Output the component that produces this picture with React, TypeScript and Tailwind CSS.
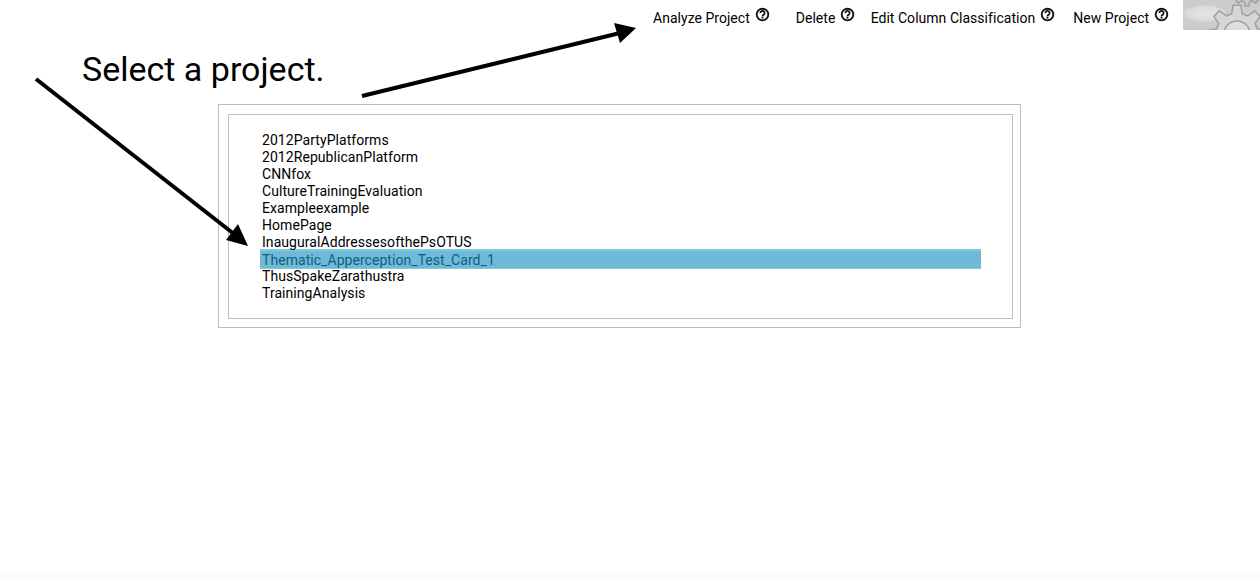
import React from 'react'

const projects = [
  '2012PartyPlatforms',
  '2012RepublicanPlatform',
  'CNNfox',
  'CultureTrainingEvaluation',
  'Exampleexample',
  'HomePage',
  'InauguralAddressesofthePsOTUS',
  'Thematic_Apperception_Test_Card_1',
  'ThusSpakeZarathustra',
  'TrainingAnalysis',
]

const gearPath = (cx: number, cy: number, outer: number, inner: number, teeth: number) => {
  const step = (Math.PI * 2) / teeth
  let d = ''
  for (let i = 0; i < teeth; i++) {
    const a = -Math.PI / 2 + i * step
    const pts: [number, number][] = [
      [a - step * 0.32, inner],
      [a - step * 0.17, outer],
      [a + step * 0.17, outer],
      [a + step * 0.32, inner],
    ]
    for (const [ang, r] of pts) {
      const x = (cx + Math.cos(ang) * r).toFixed(1)
      const y = (cy + Math.sin(ang) * r).toFixed(1)
      d += `${d ? 'L' : 'M'}${x} ${y}`
    }
  }
  return d + 'Z'
}

const HelpIcon = () => (
  <svg width="15" height="15" viewBox="0 0 24 24" fill="none" className="text-[#111]">
    <circle cx="12" cy="12" r="9.3" stroke="currentColor" strokeWidth="3" />
    <path d="M8.6 9.8a3.4 3.4 0 1 1 5.3 2.6c-1.2.8-1.9 1.2-1.9 2.6" stroke="currentColor" strokeWidth="2.8" />
    <rect x="10.6" y="16" width="2.8" height="2.6" fill="currentColor" />
  </svg>
)

const NavItem = ({ label, className }: { label: string; className: string }) => (
  <div className={`flex items-start ${className}`}>
    <span className="mt-[9px] text-[14px] leading-[18px] tracking-[0.03px]">{label}</span>
    <span className="ml-[5px] mt-[7px]"><HelpIcon /></span>
  </div>
)

const App = () => {
  return (
    <div className="relative h-[580px] w-[1260px] overflow-hidden bg-white text-black font-['Roboto',sans-serif]">
      {/* top nav */}
      <div className="flex h-[30px] items-start pl-[653px]">
        <NavItem label="Analyze Project" className="w-[143px]" />
        <NavItem label="Delete" className="w-[75px]" />
        <NavItem label="Edit Column Classification" className="w-[203px]" />
        <NavItem label="New Project" className="w-[110px]" />
        <div className="h-[30px] w-[77px] overflow-hidden">
          <svg width="77" height="30" viewBox="0 0 77 30">
            <defs>
              <radialGradient id="glow" cx="0.28" cy="0.45" r="0.3">
                <stop offset="0" stopColor="#e4e4e4" />
                <stop offset="0.75" stopColor="#dcdcdc" />
                <stop offset="1" stopColor="#cccccc" />
              </radialGradient>
            </defs>
            <rect width="77" height="30" fill="url(#glow)" />
            <g stroke="#a2a2a2" strokeWidth="1.6" fill="#c8c8c8">
              <path d={gearPath(64, -8, 14, 10, 8)} />
              <path d={gearPath(54, 34, 29, 21, 8)} fill="#d6d6d6" />
              <circle cx="54" cy="34" r="13" fill="#dedede" />
            </g>
          </svg>
        </div>
      </div>

      {/* heading */}
      <h1 className="ml-[82px] mt-[17px] text-[34px] font-normal leading-[44px]">Select a project.</h1>

      {/* project list */}
      <div className="ml-[218px] mt-[13px] h-[224px] w-[803px] border border-[#bdbdbd] pb-[8px] pl-[9px] pr-[7px] pt-[9px]">
        <div className="h-[205px] border border-[#bdbdbd] pl-[31px] pt-[17px]">
          {projects.map((name) => {
            const selected = name.startsWith('Thematic')
            return (
              <div
                key={name}
                className={
                  selected
                    ? 'h-[17px] w-[721px] bg-[#71bad7] pl-[2px] text-[14px] leading-[19px] tracking-[0.05px] text-[#0f607f] shadow-[0_-2px_0_#7dcbe3,0_1px_0_#7dcbe3]'
                    : 'h-[17px] pl-[2px] text-[14px] leading-[17px] tracking-[0.06px]'
                }
              >
                {name}
              </div>
            )
          })}
        </div>
      </div>

      {/* arrows */}
      <svg className="absolute left-0 top-0" width="1260" height="300" viewBox="0 0 1260 300" fill="none">
        <line x1="36" y1="79" x2="234" y2="234" stroke="#000" strokeWidth="4" />
        <polygon points="248,246 226,240 238,224" fill="#000" />
        <line x1="362" y1="96" x2="620" y2="33" stroke="#000" strokeWidth="4" />
        <polygon points="636,28 620,43 614,23" fill="#000" />
      </svg>

      {/* faint bottom fade */}
      <div className="absolute bottom-0 left-0 h-[10px] w-full bg-gradient-to-b from-white to-[#fafafa]" />
    </div>
  )
}

export default App
